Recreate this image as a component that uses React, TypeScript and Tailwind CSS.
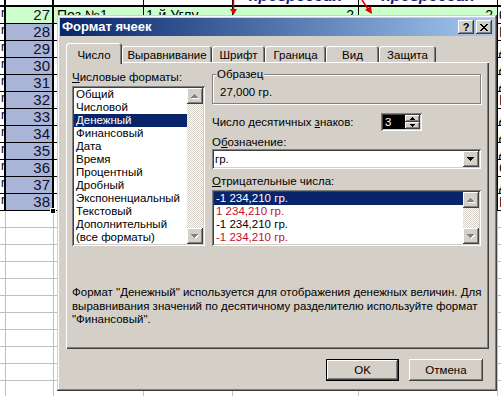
import React from 'react';

const raised = "shadow-[inset_-1px_-1px_0_#404040,inset_1px_1px_0_#ffffff,inset_-2px_-2px_0_#808080]";
const sunken = "shadow-[inset_1px_1px_0_#808080,inset_-1px_-1px_0_#ffffff,inset_2px_2px_0_#404040,inset_-2px_-2px_0_#d4d0c8]";

function UpArrow({ disabled }: { disabled?: boolean }) {
  return (
    <svg width="8" height="5" viewBox="0 0 8 5" shapeRendering="crispEdges">
      {disabled && <path d="M4 1h1v1h1v1h1v1h1v1H1V4h1V3h1V2h1z" fill="#ffffff" />}
      <path d="M3 0h1v1h1v1h1v1h1v1H0V3h1V2h1V1h1z" fill={disabled ? '#808080' : '#000000'} />
    </svg>
  );
}

function DownArrow({ disabled }: { disabled?: boolean }) {
  return (
    <svg width="8" height="5" viewBox="0 0 8 5" shapeRendering="crispEdges">
      {disabled && <path d="M1 1h7v1H7v1H6v1H5v1H4V4H3V3H2V2H1z" fill="#ffffff" />}
      <path d="M0 0h7v1H6v1H5v1H4v1H3V3H2V2H1V1H0z" fill={disabled ? '#808080' : '#000000'} />
    </svg>
  );
}

function Scrollbar() {
  return (
    <div className="w-[16px] shrink-0 flex flex-col">
      <div className={`h-[16px] bg-[#d4d0c8] ${raised} flex items-center justify-center`}>
        <UpArrow disabled />
      </div>
      <div className="flex-1 bg-[image:repeating-conic-gradient(#d4d0c8_0%_25%,#ffffff_0%_50%)] bg-[length:2px_2px]" />
      <div className={`h-[16px] bg-[#d4d0c8] ${raised} flex items-center justify-center`}>
        <DownArrow disabled />
      </div>
    </div>
  );
}

const dataRows = [
  { n: 27, g: '0' },
  { n: 28, g: 'М' },
  { n: 29, g: 'Д' },
  { n: 30, g: 'Д' },
  { n: 31, g: 'Д' },
  { n: 32, g: 'М' },
  { n: 33, g: 'Д' },
  { n: 34, g: 'Д' },
  { n: 35, g: 'Д' },
  { n: 36, g: 'С' },
  { n: 37, g: 'Д' },
  { n: 38, g: 'Г' },
];

function Sheet() {
  const empty = Array.from({ length: 12 }, (_, i) => i);
  return (
    <div className="flex flex-col text-[14px] leading-[16px] text-black">
      {/* header strip */}
      <div className="flex h-[7px] border-b-2 border-black overflow-hidden">
        <div className="w-[6px] shrink-0 border-r-2 border-black" />
        <div className="w-[48px] shrink-0 border-r-2 border-black" />
        <div className="w-[90px] shrink-0 border-r border-black" />
        <div className="w-[89px] shrink-0 border-r border-black" />
        <div className="w-[126px] shrink-0 border-r border-black flex justify-center">
          <span className="-mt-[12px] font-bold italic text-[16px] text-[#1a1a80]">прогрессия</span>
        </div>
        <div className="w-[139px] shrink-0 border-r border-black flex justify-center">
          <span className="-mt-[12px] font-bold italic text-[16px] text-[#1a1a80]">прогрессия</span>
        </div>
        <div className="w-[60px] shrink-0" />
      </div>
      {dataRows.map((r, i) => {
        const green = i === 0;
        const rowBg = green ? 'bg-[#ccffcc]' : 'bg-white';
        return (
          <div key={r.n} className="flex h-[17px] border-b border-black">
            <div className="w-[6px] shrink-0 border-r-2 border-black bg-white overflow-hidden flex justify-end">
              <span className="text-[12px] leading-[12px] -mr-[1px]">r</span>
            </div>
            <div className={`relative w-[48px] shrink-0 border-r-2 border-black ${green ? 'bg-[#ccffcc]' : 'bg-[#aab4d6]'} flex items-center justify-end pr-[2px] text-[15px] text-[#101030]`}>
              {r.n}
              {i === dataRows.length - 1 && (
                <div className="absolute -right-[4px] -bottom-[4px] w-[6px] h-[6px] bg-black border border-white" />
              )}
            </div>
            <div className={`w-[90px] shrink-0 border-r border-black ${rowBg} pl-[3px] whitespace-nowrap overflow-hidden`}>
              {green ? 'Поз №1' : 'Поз №' + (i + 1)}
            </div>
            <div className={`w-[89px] shrink-0 border-r border-black ${rowBg} pl-[2px] whitespace-nowrap overflow-hidden`}>
              {green ? '1-й Углу' : ''}
            </div>
            <div className={`w-[126px] shrink-0 border-r border-black ${rowBg} text-right pr-[4px]`}>2</div>
            <div className={`w-[139px] shrink-0 border-r border-black ${rowBg} text-right pr-[4px]`}>2</div>
            <div className="w-[60px] shrink-0 bg-white pl-[1px]">{r.g}</div>
          </div>
        );
      })}
      {empty.map((i) => (
        <div key={i} className="flex h-[17px] border-b border-[#c0c0c0]">
          <div className="w-[6px] shrink-0 border-r border-[#c0c0c0]" />
          <div className="w-[48px] shrink-0 border-r border-[#c0c0c0]" />
          <div className="w-[90px] shrink-0 border-r border-[#c0c0c0]" />
          <div className="w-[89px] shrink-0 border-r border-[#c0c0c0]" />
          <div className="w-[126px] shrink-0 border-r border-[#c0c0c0]" />
          <div className="w-[139px] shrink-0 border-r border-[#c0c0c0]" />
          <div className="w-[60px] shrink-0" />
        </div>
      ))}
    </div>
  );
}

function Arrows() {
  return (
    <svg className="absolute left-0 top-0 pointer-events-none" width="501" height="20" viewBox="0 0 501 20">
      <line x1="233.5" y1="0" x2="233.5" y2="10" stroke="#e00000" strokeWidth="1.5" />
      <polygon points="230,9 237,9 233.5,15" fill="#e00000" />
      <line x1="362" y1="0" x2="368" y2="9" stroke="#e00000" strokeWidth="1.5" />
      <polygon points="365,10 371,6 372,14" fill="#e00000" />
    </svg>
  );
}

const formats = [
  'Общий',
  'Числовой',
  'Денежный',
  'Финансовый',
  'Дата',
  'Время',
  'Процентный',
  'Дробный',
  'Экспоненциальный',
  'Текстовый',
  'Дополнительный',
  '(все форматы)',
];

const negatives = [
  { t: '-1 234,210 гр.', sel: true, red: false },
  { t: '1 234,210 гр.', sel: false, red: true },
  { t: '-1 234,210 гр.', sel: false, red: false },
  { t: '-1 234,210 гр.', sel: false, red: true },
];

const tabs = [
  { t: 'Число', w: 'w-[56px]', sel: true },
  { t: 'Выравнивание', w: 'w-[90px]', sel: false },
  { t: 'Шрифт', w: 'w-[53px]', sel: false },
  { t: 'Граница', w: 'w-[61px]', sel: false },
  { t: 'Вид', w: 'w-[53px]', sel: false },
  { t: 'Защита', w: 'w-[57px]', sel: false },
];

function Dialog() {
  return (
    <div className="absolute left-[57px] top-[15px] w-[440px] h-[376px] bg-[#d4d0c8] shadow-[inset_-1px_-1px_0_#404040,inset_1px_1px_0_#d4d0c8,inset_-2px_-2px_0_#808080,inset_2px_2px_0_#ffffff] p-[3px] flex flex-col font-['Liberation_Sans',Arial,sans-serif] text-[11.5px] leading-[13px] text-black">
      {/* title bar */}
      <div className="h-[18px] shrink-0 flex items-center justify-between bg-linear-to-r from-[#0a246a] to-[#a6caf0] pl-[2px] pr-[2px]">
        <span className="text-white font-bold text-[13px] leading-[14px]">Формат ячеек</span>
        <div className="flex gap-[2px]">
          <div className={`w-[16px] h-[14px] bg-[#d4d0c8] ${raised} flex items-center justify-center font-bold text-[11px] leading-[11px]`}>?</div>
          <div className={`w-[16px] h-[14px] bg-[#d4d0c8] ${raised} flex items-center justify-center`}>
            <svg width="8" height="7" viewBox="0 0 8 7" shapeRendering="crispEdges">
              <path d="M0 0h2v1h1v1h2V1h1V0h2v1H7v1H6v1H5v1h1v1h1v1h1v1H6V6H5V5H3v1H2v1H0V6h1V5h1V4h1V3H2V2H1V1H0z" fill="#000" />
            </svg>
          </div>
        </div>
      </div>

      {/* tabs */}
      <div className="mt-[7px] h-[19px] shrink-0 flex items-end pl-[6px]">
        {tabs.map((tb) =>
          tb.sel ? (
            <div
              key={tb.t}
              className={`${tb.w} relative z-10 h-[21px] -mb-[2px] bg-[#d4d0c8] rounded-t-[3px] shadow-[inset_1px_1px_0_#ffffff,inset_-1px_0_0_#404040,inset_-2px_0_0_#808080] flex justify-center pt-[6px]`}
            >
              {tb.t}
            </div>
          ) : (
            <div
              key={tb.t}
              className={`${tb.w} h-[16px] bg-[#d4d0c8] rounded-t-[3px] shadow-[inset_1px_1px_0_#ffffff,inset_-1px_0_0_#404040,inset_-2px_0_0_#808080] flex justify-center pt-[3px]`}
            >
              {tb.t}
            </div>
          )
        )}
      </div>

      {/* panel */}
      <div className="ml-[6px] mr-[5px] h-[287px] shrink-0 shadow-[inset_1px_1px_0_#ffffff,inset_-1px_-1px_0_#404040,inset_-2px_-2px_0_#808080] pt-[9px] pl-[6px] flex flex-col">
        <div className="flex gap-[7px]">
          {/* left column */}
          <div className="w-[133px] flex flex-col">
            <div>
              <span className="underline">Ч</span>исловые форматы:
            </div>
            <div className={`mt-[2px] h-[160px] bg-white ${sunken} p-[2px] flex`}>
              <div className="flex-1 flex flex-col overflow-hidden">
                {formats.map((f, i) => (
                  <div
                    key={f}
                    className={`h-[13px] shrink-0 pl-[2px] whitespace-nowrap ${i === 2 ? 'bg-[#0a246a] text-white' : ''}`}
                  >
                    {f}
                  </div>
                ))}
              </div>
              <Scrollbar />
            </div>
          </div>

          {/* right column */}
          <div className="w-[269px] flex flex-col">
            <div className="mt-[3px] h-[30px] border border-[#808080] shadow-[inset_1px_1px_0_#ffffff,1px_1px_0_#ffffff] flex flex-col">
              <span className="-mt-[7px] ml-[3px] px-[1px] w-fit bg-[#d4d0c8]">Образец</span>
              <span className="mt-[5px] ml-[7px]">27,000 гр.</span>
            </div>

            <div className="mt-[9px] h-[18px] flex items-center">
              <span className="w-[169px]">
                Число десятичных <span className="underline">з</span>наков:
              </span>
              <div className={`w-[41px] h-[18px] bg-white ${sunken} p-[2px] flex`}>
                <div className="flex-1 bg-black text-white pl-[2px] leading-[14px]">3</div>
                <div className="w-[15px] flex flex-col">
                  <div className={`h-[7px] bg-[#d4d0c8] ${raised} flex items-center justify-center`}>
                    <svg width="5" height="3" viewBox="0 0 5 3" shapeRendering="crispEdges">
                      <path d="M2 0h1v1h1v1h1v1H0V2h1V1h1z" fill="#000" />
                    </svg>
                  </div>
                  <div className={`h-[7px] bg-[#d4d0c8] ${raised} flex items-center justify-center`}>
                    <svg width="5" height="3" viewBox="0 0 5 3" shapeRendering="crispEdges">
                      <path d="M0 0h5v1H4v1H3v1H2V2H1V1H0z" fill="#000" />
                    </svg>
                  </div>
                </div>
              </div>
            </div>

            <div className="mt-[5px]">
              О<span className="underline">б</span>означение:
            </div>
            <div className={`h-[20px] bg-white ${sunken} p-[2px] flex`}>
              <div className="flex-1 pl-[1px] leading-[16px]">гр.</div>
              <div className={`w-[16px] h-[16px] bg-[#d4d0c8] ${raised} flex items-center justify-center`}>
                <DownArrow />
              </div>
            </div>

            <div className="mt-[6px]">
              <span className="underline">О</span>трицательные числа:
            </div>
            <div className={`mt-[2px] h-[56px] bg-white ${sunken} p-[2px] flex`}>
              <div className="flex-1 flex flex-col overflow-hidden">
                {negatives.map((n, i) => (
                  <div
                    key={i}
                    className={`h-[13px] shrink-0 pl-[2px] whitespace-nowrap ${n.sel ? 'bg-[#0a246a] text-white' : n.red ? 'text-[#c0102a]' : ''}`}
                  >
                    {n.t}
                  </div>
                ))}
              </div>
              <Scrollbar />
            </div>
          </div>
        </div>

        <p className="mt-[40px] leading-[13.5px]">
          Формат "Денежный" используется для отображения денежных величин. Для
          <br />
          выравнивания значений по десятичному разделителю используйте формат
          <br />
          "Финансовый".
        </p>
      </div>

      {/* buttons */}
      <div className="mt-[10px] flex justify-end gap-[10px] pr-[11px]">
        <button className="w-[73px] h-[22px] bg-[#d4d0c8] shadow-[inset_0_0_0_1px_#000000,inset_-2px_-2px_0_#404040,inset_2px_2px_0_#ffffff,inset_-3px_-3px_0_#808080] text-[11.5px]">
          OK
        </button>
        <button className={`w-[74px] h-[22px] bg-[#d4d0c8] ${raised} text-[11.5px]`}>Отмена</button>
      </div>
    </div>
  );
}

export default function App() {
  return (
    <div className="relative w-[501px] h-[396px] overflow-hidden bg-white font-['Liberation_Sans',Arial,sans-serif]">
      <Sheet />
      <Arrows />
      <Dialog />
    </div>
  );
}
